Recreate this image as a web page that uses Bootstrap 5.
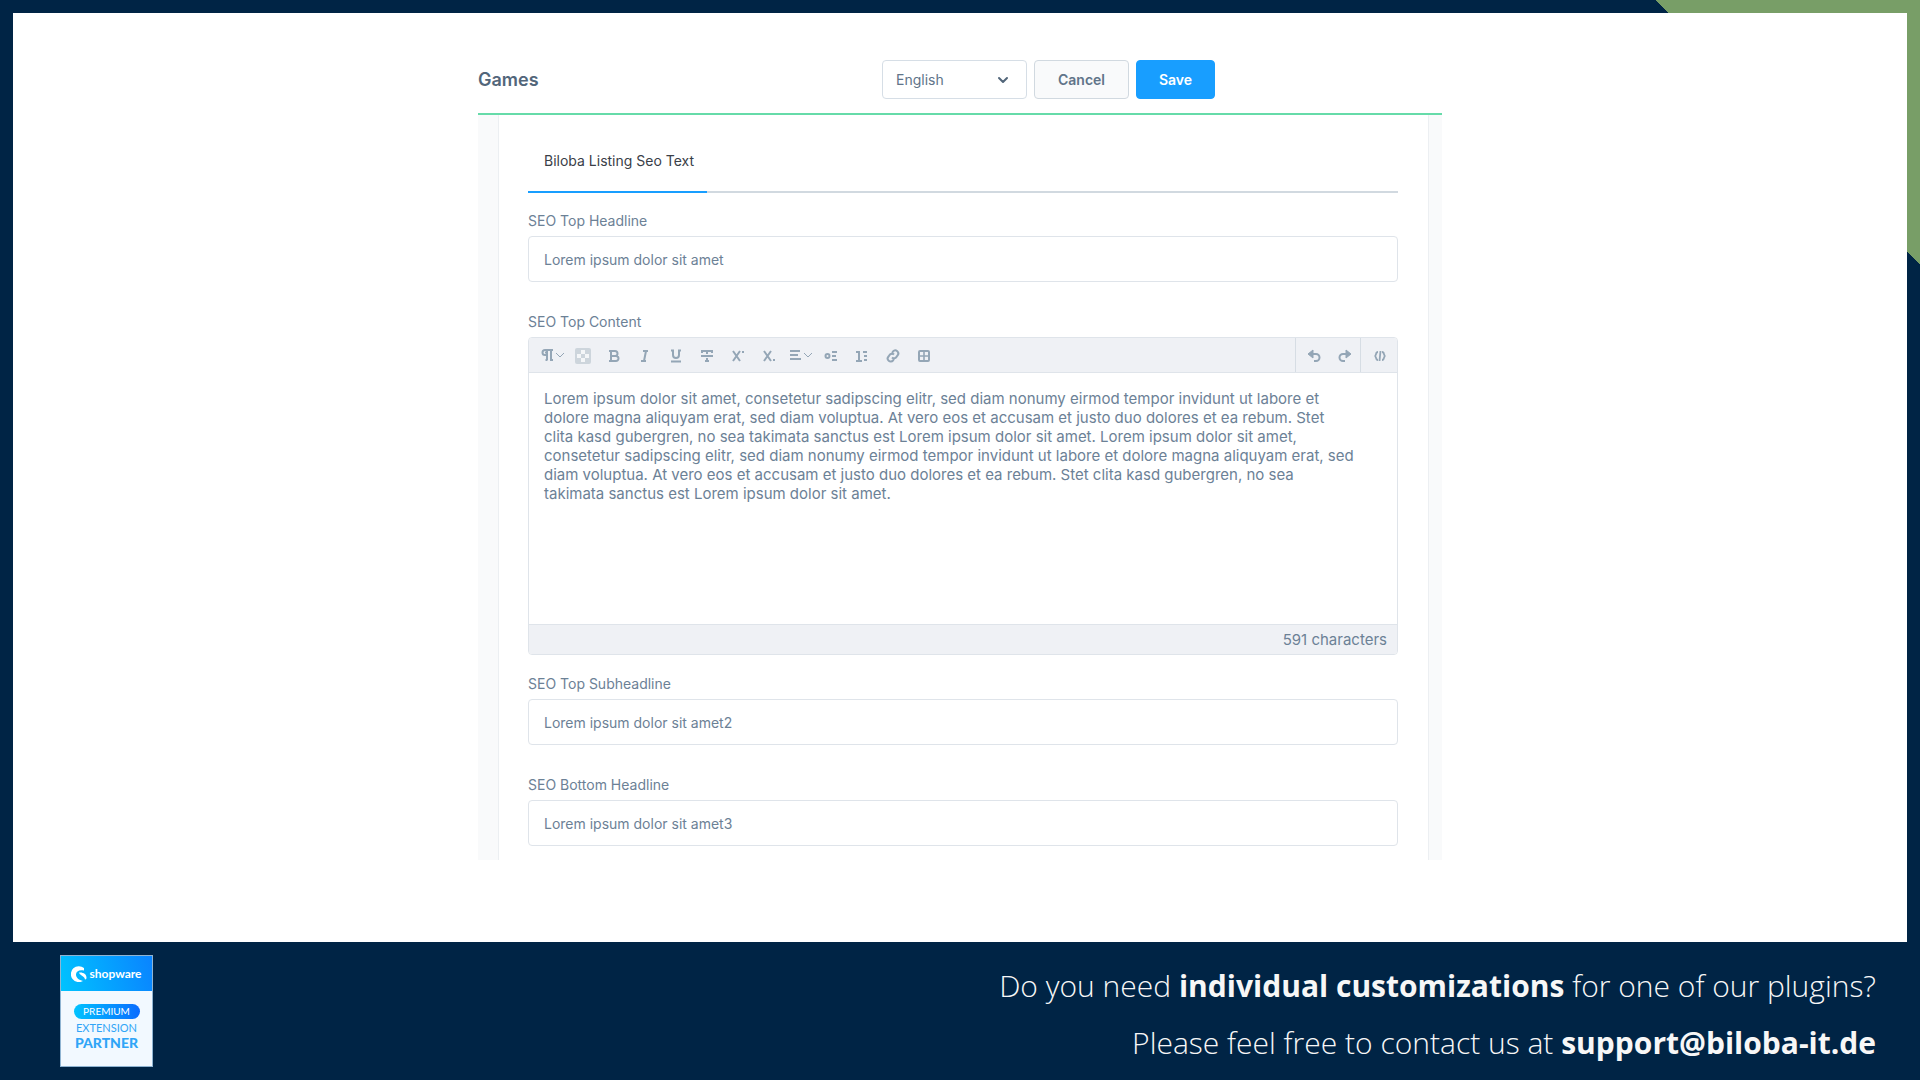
<!DOCTYPE html>
<html lang="en">
<head>
<meta charset="utf-8">
<meta name="viewport" content="width=device-width, initial-scale=1">
<title>Biloba Listing Seo Text</title>
<link href="https://cdn.jsdelivr.net/npm/bootstrap@5.3.0/dist/css/bootstrap.min.css" rel="stylesheet">
<style>
  :root { --navy: #002445; --leaf: #789e67; --ink: #52667a; --soft: #6c8196; --line: #dfe4ea; --tint: #eff1f5; --blue: #189eff; }
  body { font-family: Inter, "Liberation Sans", sans-serif; color: var(--ink); padding: 13px 13px 0; background: linear-gradient(225deg, var(--leaf) 187px, var(--navy) 187px); background-color: var(--navy); }
  .stage { background: #fff; padding-top: 46px; }
  .shot { max-width: 964px; font-size: 14px; line-height: 20px; }
  .shot-head { padding: 1px 227px 14px 0; border-bottom: 2px solid #66dba9; gap: 7px; }
  .shot-head h1 { font-size: 18px; line-height: 24px; font-weight: 600; color: var(--ink); }
  .shot .ctl { height: 39px; font-size: 14px; border-radius: 4px; padding: 0 13px; color: #607489; border-color: #d6dee6; }
  .shot .lang { width: 145px; background-size: 12px 12px; background-position: right 17px center;
    background-image: url("data:image/svg+xml,%3Csvg xmlns='http://www.w3.org/2000/svg' viewBox='0 0 12 12' fill='none' stroke='%2352667a' stroke-width='2' stroke-linecap='round' stroke-linejoin='round'%3E%3Cpath d='M2 4l4 4 4-4'/%3E%3C/svg%3E"); }
  .shot .btn.ctl { font-weight: 600; }
  .shot .cancel { width: 95px; background: #f9fafb; color: #607489; border-color: #d1d9e0; }
  .shot .save { width: 79px; background: var(--blue); border-color: var(--blue); color: #fff; }
  .shot-body { background: #f9fafb; padding: 0 13px 0 20px; }
  .sheet { background: #fff; border: solid #eceff2; border-width: 0 1px; padding: 22px 30px 14px 29px; }
  .tabs { border-bottom: 2px solid #d1d9e0; margin-bottom: 16px; }
  .tabs .nav-link { color: #3a4048; padding: 14px 13px 20px 16px; border-bottom: 2px solid var(--blue); margin-bottom: -2px; line-height: 20px; }
  .shot label { color: var(--soft); line-height: 24px; margin-bottom: 3px; }
  .shot .field { height: 46px; font-size: 14px; padding: 0 15px; border-color: var(--line); border-radius: 4px; color: var(--soft); }
  .gap-field { margin-bottom: 28px; }
  .editor { border: 1px solid var(--line); border-radius: 4px; overflow: hidden; margin-bottom: 17px; }
  .tools { background: var(--tint); height: 35px; border-bottom: 1px solid var(--line); }
  .tools .grp { padding: 0 7px; }
  .tools .grp + .grp { border-left: 1px solid #d6dde4; padding: 0 0 0 2px; }
  .tools .grp.code { padding: 0 2px 0 3px; }
  .tools button { width: 31px; padding: 0; border: 0; background: none; height: 34px; color: #94a6b6; }
  .tools svg { width: 16px; height: 16px; fill: none; stroke: currentColor; stroke-width: 2; flex: none; }
  .tools svg.chev { width: 10px; height: 10px; stroke-width: 1; }
  .editor textarea { border: 0; border-radius: 0; height: 251px; padding: 16px 15px; font-size: 15px; line-height: 19px; resize: none; color: var(--soft); }
  .count { background: var(--tint); border-top: 1px solid var(--line); font-size: 15px; line-height: 29px; padding: 0 10px; color: var(--soft); }
  .foot { padding: 0 31px 0 47px; height: 138px; color: #f7f7f7; }
  .seal { width: 93px; height: 112px; background: #f2f9ff; border: 1px solid #8fb4d2; font-family: Lato, "Open Sans", sans-serif; color: #30a5f7; line-height: 15px; }
  .seal-top { height: 35px; gap: 2px; font-size: 12px; font-weight: 700; color: #fff; background: linear-gradient(75deg, #00c3ff, #0a84ff); margin-bottom: 13px; }
  .pill { width: 66px; border-radius: 8px; font-size: 10px; color: #fff; background: linear-gradient(90deg, #00c3ff, #0a6cff); margin-bottom: 2px; }
  .seal-ext { font-size: 11px; line-height: 14px; }
  .seal-par { font-size: 14px; font-weight: 900; }
  .pitch { font-family: "Open Sans", "Noto Sans", sans-serif; font-weight: 300; font-size: 30px; line-height: 57px; padding-top: 6px; }
  .pitch strong { font-weight: 700; }
  .pitch a { color: inherit; }
</style>
</head>
<body class="d-flex flex-column min-vh-100">
<main class="stage flex-grow-1">
  <section class="shot mx-auto">
    <header class="shot-head d-flex align-items-center">
      <h1 class="mb-0 me-auto">Games</h1>
      <select class="form-select ctl lang" aria-label="Language"><option>English</option></select>
      <button type="button" class="btn ctl cancel">Cancel</button>
      <button type="button" class="btn ctl save">Save</button>
    </header>
    <div class="shot-body">
      <form class="sheet">
        <nav class="nav tabs"><a class="nav-link" href="#listing">Biloba Listing Seo Text</a></nav>
        <div class="gap-field" id="listing">
          <label class="d-block" for="topHead">SEO Top Headline</label>
          <input class="form-control field" id="topHead" value="Lorem ipsum dolor sit amet">
        </div>
        <label class="d-block" for="topText">SEO Top Content</label>
        <div class="editor">
          <div class="tools d-flex">
            <div class="grp d-flex me-auto">
              <button type="button" class="d-flex align-items-center justify-content-center" aria-label="Paragraph"><svg viewBox="0 0 16 16"><path d="M14 3H6a2.500 2.500 0 0 0 0 5h2M8 3v10M12 3v10M6 5.500h2M6.500 13h2M11 13h3"/></svg><svg class="chev" viewBox="0 0 10 10"><path d="M1 3l4 4 4-4"/></svg></button>
              <button type="button" aria-label="Text color"><svg viewBox="0 0 16 16"><rect x="0" y="0" width="16" height="16" rx="2" fill="#cdd5dc" stroke="none"/><path fill="#f4f6f8" stroke="none" d="M6 2h4v4H6zM2 6h4v4H2zM10 6h4v4h-4zM6 10h4v4H6z"/></svg></button>
              <button type="button" aria-label="Bold"><svg viewBox="0 0 16 16"><path d="M3 3h6a2.500 2.500 0 0 1 0 5H5h5a2.500 2.500 0 0 1 0 5H3M5 3v10"/></svg></button>
              <button type="button" aria-label="Italic"><svg viewBox="0 0 16 16"><path d="M6 3h5M4 13h5M9 3l-2 10"/></svg></button>
              <button type="button" aria-label="Underline"><svg viewBox="0 0 16 16"><path d="M5 2v5a3 3 0 0 0 6 0V2M3 2.500h3M10 2.500h3M3 13.500h10"/></svg></button>
              <button type="button" aria-label="Strikethrough"><svg viewBox="0 0 16 16"><path d="M3 5V3h10v2M8 3v3M2 8h12M8 10v3M6 13h4"/></svg></button>
              <button type="button" aria-label="Superscript"><svg viewBox="0 0 16 16"><path d="M3 3l7 10M10 3L3 13M12 4h2"/></svg></button>
              <button type="button" aria-label="Subscript"><svg viewBox="0 0 16 16"><path d="M3 3l7 10M10 3L3 13M12 12h2"/></svg></button>
              <button type="button" class="d-flex align-items-center justify-content-center" aria-label="Alignment"><svg viewBox="0 0 16 16"><path d="M3 4h10M3 8h8M3 12h11"/></svg><svg class="chev" viewBox="0 0 10 10"><path d="M1 3l4 4 4-4"/></svg></button>
              <button type="button" aria-label="Bullet list"><svg viewBox="0 0 16 16"><circle cx="4.500" cy="8" r="2"/><path d="M9 4h5M9 8h4M9 12h5"/></svg></button>
              <button type="button" aria-label="Numbered list"><svg viewBox="0 0 16 16"><path d="M2 4h3v9M2 13h6M9 4h4M10 8h3M10 12h3"/></svg></button>
              <button type="button" aria-label="Link"><svg viewBox="0 0 16 16"><path d="M7 5l1-1.500a2.800 2.800 0 0 1 4.500 4L11 9.500a2.800 2.800 0 0 1-4 0M9 11l-1 1.500a2.800 2.800 0 0 1-4.500-4L5 6.500a2.800 2.800 0 0 1 4 0"/></svg></button>
              <button type="button" aria-label="Table"><svg viewBox="0 0 16 16"><rect x="3" y="3" width="10" height="10" rx="1"/><path d="M8 3v10M3 8h10" stroke-width="1.600"/></svg></button>
            </div>
            <div class="grp d-flex">
              <button type="button" aria-label="Undo"><svg viewBox="0 0 16 16"><path d="M4 6h6a3.500 3.500 0 0 1 0 7H8"/><path d="M2 6l5-4v8z" fill="currentColor" stroke-width="1"/></svg></button>
              <button type="button" aria-label="Redo"><svg viewBox="0 0 16 16"><path d="M12 6H6a3.500 3.500 0 0 0 0 7h2"/><path d="M14 6L9 2v8z" fill="currentColor" stroke-width="1"/></svg></button>
            </div>
            <div class="grp code d-flex">
              <button type="button" aria-label="Source code"><svg viewBox="0 0 16 16"><path d="M6 4C3 4 5 8 2.500 8 5 8 3 12 6 12M10 4c3 0 1 4 3.500 4C11 8 13 12 10 12M8.500 3l-1 10" stroke-width="1.800"/></svg></button>
            </div>
          </div>
          <textarea class="form-control d-block" id="topText">Lorem ipsum dolor sit amet, consetetur sadipscing elitr, sed diam nonumy eirmod tempor invidunt ut labore et
dolore magna aliquyam erat, sed diam voluptua. At vero eos et accusam et justo duo dolores et ea rebum. Stet
clita kasd gubergren, no sea takimata sanctus est Lorem ipsum dolor sit amet. Lorem ipsum dolor sit amet,
consetetur sadipscing elitr, sed diam nonumy eirmod tempor invidunt ut labore et dolore magna aliquyam erat, sed
diam voluptua. At vero eos et accusam et justo duo dolores et ea rebum. Stet clita kasd gubergren, no sea
takimata sanctus est Lorem ipsum dolor sit amet.</textarea>
          <div class="count text-end">591 characters</div>
        </div>
        <div class="gap-field">
          <label class="d-block" for="topSub">SEO Top Subheadline</label>
          <input class="form-control field" id="topSub" value="Lorem ipsum dolor sit amet2">
        </div>
        <label class="d-block" for="bottomHead">SEO Bottom Headline</label>
        <input class="form-control field" id="bottomHead" value="Lorem ipsum dolor sit amet3">
      </form>
    </div>
  </section>
</main>
<footer class="foot d-flex align-items-center justify-content-between">
  <div class="seal d-flex flex-column align-items-center text-center">
    <div class="seal-top d-flex align-items-center justify-content-center w-100">
      <svg width="16" height="16" viewBox="0 0 16 16" fill="#fff"><path d="M13 2A8 8 0 1 0 12 15C8 14 5 12 5 8.500 5 5.500 8 3.500 13 4.500z"/><path d="M8 6.500c4-.5 8 1.500 7.500 6l-1.500 1.200C14 10 9 10 8 6.500z"/></svg>
      <span>shopware</span>
    </div>
    <div class="pill">PREMIUM</div>
    <div class="seal-ext">EXTENSION</div>
    <div class="seal-par">PARTNER</div>
  </div>
  <div class="pitch text-end">
    <div>Do you need <strong>individual customizations</strong> for one of our plugins?</div>
    <div>Please feel free to contact us at <a class="fw-bold text-decoration-none" href="mailto:support@biloba-it.de">support@biloba-it.de</a></div>
  </div>
</footer>
<script src="https://cdn.jsdelivr.net/npm/bootstrap@5.3.0/dist/js/bootstrap.bundle.min.js"></script>
</body>
</html>
